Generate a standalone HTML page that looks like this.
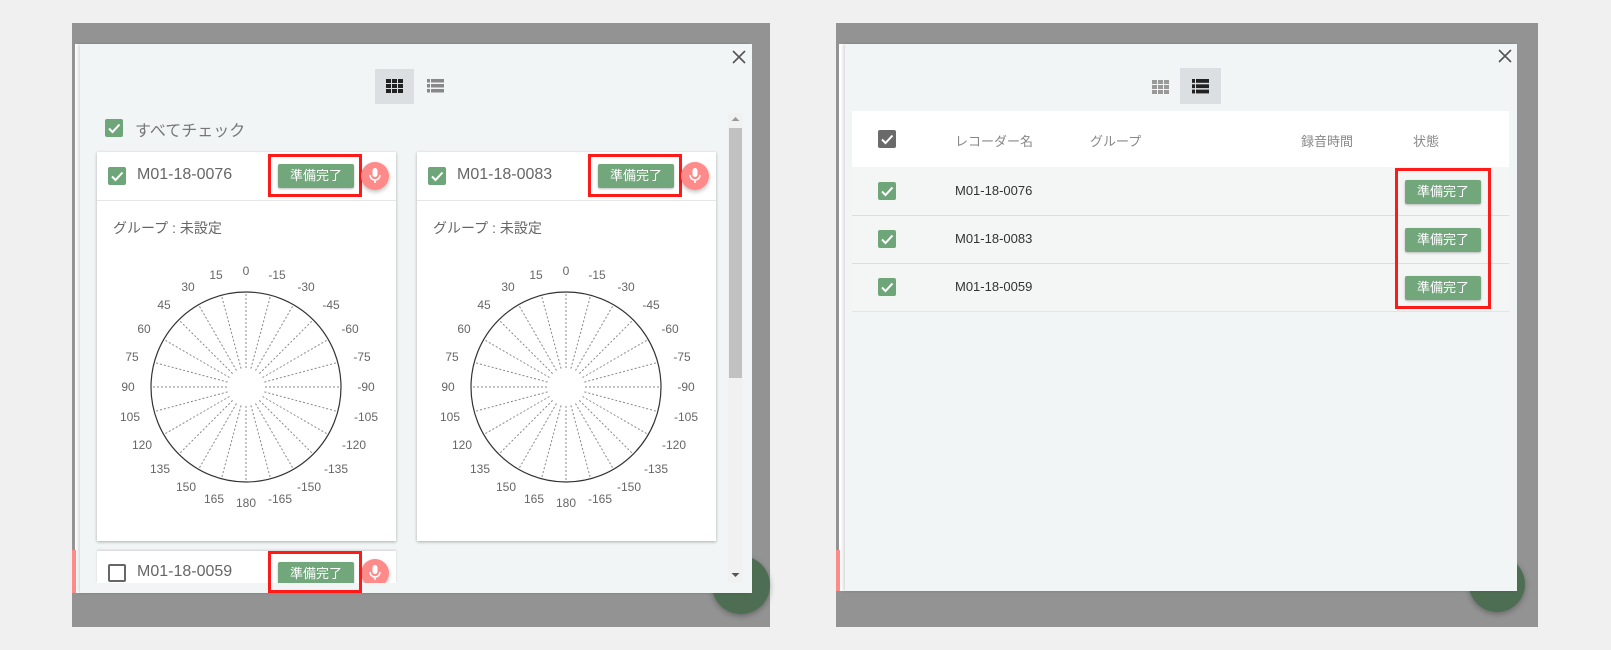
<!DOCTYPE html>
<html><head><meta charset="utf-8"><style>
*{box-sizing:border-box;margin:0;padding:0}
body{width:1611px;height:650px;background:#f0f0f0;position:relative;overflow:hidden;font-family:"Liberation Sans","Noto Sans CJK JP",sans-serif;color:#666}
.abs{position:absolute}
.gray{background:#939393}
.modal{background:#f2f5f6}
.cb{position:absolute;width:18px;height:18px;border-radius:2px;background:#6fa679}
.cb svg{position:absolute;left:0;top:0}
.cbo{position:absolute;width:18px;height:18px;border:2px solid #666;border-radius:2px;background:#fff}
.btn{position:absolute;background:#72a77c;color:#fff;font-size:13px;text-align:center;border-radius:2px;box-shadow:0 1px 2px rgba(0,0,0,.25)}
.red{position:absolute;border:3px solid #ff1a1a}
.mic{position:absolute;width:28px;height:28px;border-radius:50%;background:#ff8a8a;box-shadow:0 2px 4px rgba(0,0,0,.25)}
.card{position:absolute;background:#fff;box-shadow:0 1px 3px rgba(0,0,0,.3)}
</style></head><body>

<!-- LEFT -->
<div class="abs gray" style="left:72px;top:23px;width:698px;height:604px"></div>
<div class="abs" style="left:75px;top:44px;width:6px;height:549px;background:#fff"></div>
<div class="abs" style="left:72px;top:550px;width:4px;height:43px;background:#ff8a8a"></div>
<div class="abs" style="left:712px;top:556px;width:58px;height:58px;border-radius:50%;background:#4e6e53;box-shadow:0 2px 6px rgba(0,0,0,.3)"></div>
<div class="abs modal" style="left:80px;top:44px;width:672px;height:549px;box-shadow:-2px 0 3px rgba(0,0,0,.15)"></div>
<svg class="abs" style="left:731px;top:49px" width="16" height="16"><path d="M2 2L14 14M14 2L2 14" stroke="#555" stroke-width="1.6"/></svg>
<div class="abs" style="left:375px;top:69px;width:39px;height:35px;background:#dcdfe1"></div>
<svg class="abs" style="left:386px;top:79px" width="17" height="15"><g fill="#222"><rect x="0" y="0" width="5" height="4"/><rect x="6" y="0" width="5" height="4"/><rect x="12" y="0" width="5" height="4"/><rect x="0" y="5" width="5" height="4"/><rect x="6" y="5" width="5" height="4"/><rect x="12" y="5" width="5" height="4"/><rect x="0" y="10" width="5" height="4"/><rect x="6" y="10" width="5" height="4"/><rect x="12" y="10" width="5" height="4"/></g></svg>
<svg class="abs" style="left:427px;top:79px" width="17" height="15"><g fill="#888"><rect x="0" y="0" width="3" height="3.5"/><rect x="4" y="0" width="13" height="3.5"/><rect x="0" y="5" width="3" height="3.5"/><rect x="4" y="5" width="13" height="3.5"/><rect x="0" y="10" width="3" height="3.5"/><rect x="4" y="10" width="13" height="3.5"/></g></svg>

<div class="cb" style="left:105px;top:119px"><svg width="18" height="18"><path d="M4 9.5l3.5 3.5 7-7.5" stroke="#fff" stroke-width="2" fill="none"/></svg></div>
<div class="abs" style="left:135px;top:117px;font-size:16px;color:#777">すべてチェック</div>

<!-- scrollbar -->
<div class="abs" style="left:728px;top:113px;width:15px;height:470px;background:#f1f1f1"></div>
<div class="abs" style="left:729px;top:128px;width:13px;height:250px;background:#c1c1c1"></div>
<svg class="abs" style="left:731px;top:116px" width="9" height="6"><path d="M0.5 5L4.5 1L8.5 5Z" fill="#999"/></svg>
<svg class="abs" style="left:731px;top:572px" width="9" height="6"><path d="M0.5 1L4.5 5L8.5 1Z" fill="#555"/></svg>

<!-- card 1 -->
<div class="card" style="left:97px;top:152px;width:299px;height:389px">
 <div class="abs" style="left:0;top:48px;width:299px;height:1px;background:#e6e6e6"></div>
 <div class="cb" style="left:11px;top:15px"><svg width="18" height="18"><path d="M4 9.5l3.5 3.5 7-7.5" stroke="#fff" stroke-width="2" fill="none"/></svg></div>
 <div class="abs" style="left:40px;top:14px;font-size:16px;color:#666">M01-18-0076</div>
 <div class="abs" style="left:16px;top:66px;font-size:14px;color:#666">グループ : 未設定</div>
</div>
<!-- card 2 -->
<div class="card" style="left:417px;top:152px;width:299px;height:389px">
 <div class="abs" style="left:0;top:48px;width:299px;height:1px;background:#e6e6e6"></div>
 <div class="cb" style="left:11px;top:15px"><svg width="18" height="18"><path d="M4 9.5l3.5 3.5 7-7.5" stroke="#fff" stroke-width="2" fill="none"/></svg></div>
 <div class="abs" style="left:40px;top:14px;font-size:16px;color:#666">M01-18-0083</div>
 <div class="abs" style="left:16px;top:66px;font-size:14px;color:#666">グループ : 未設定</div>
</div>
<!-- card 3 -->
<div class="card" style="left:97px;top:551px;width:299px;height:32px;box-shadow:0 -1px 2px rgba(0,0,0,.15)">
 <div class="cbo" style="left:11px;top:13px"></div>
 <div class="abs" style="left:40px;top:12px;font-size:16px;color:#666">M01-18-0059</div>
</div>

<!-- dials -->
<svg class="abs" style="left:96px;top:237px" width="300" height="300" viewBox="-150 -150 300 300">
<defs><g id="dial">
<g stroke="#888" stroke-width="1" stroke-dasharray="2,2">
<line x1="0" y1="-19" x2="0" y2="-95"/><line x1="4.9" y1="-18.4" x2="24.6" y2="-91.8"/><line x1="9.5" y1="-16.5" x2="47.5" y2="-82.3"/><line x1="13.4" y1="-13.4" x2="67.2" y2="-67.2"/><line x1="16.5" y1="-9.5" x2="82.3" y2="-47.5"/><line x1="18.4" y1="-4.9" x2="91.8" y2="-24.6"/><line x1="19" y1="0" x2="95" y2="0"/><line x1="18.4" y1="4.9" x2="91.8" y2="24.6"/><line x1="16.5" y1="9.5" x2="82.3" y2="47.5"/><line x1="13.4" y1="13.4" x2="67.2" y2="67.2"/><line x1="9.5" y1="16.5" x2="47.5" y2="82.3"/><line x1="4.9" y1="18.4" x2="24.6" y2="91.8"/><line x1="0" y1="19" x2="0" y2="95"/><line x1="-4.9" y1="18.4" x2="-24.6" y2="91.8"/><line x1="-9.5" y1="16.5" x2="-47.5" y2="82.3"/><line x1="-13.4" y1="13.4" x2="-67.2" y2="67.2"/><line x1="-16.5" y1="9.5" x2="-82.3" y2="47.5"/><line x1="-18.4" y1="4.9" x2="-91.8" y2="24.6"/><line x1="-19" y1="0" x2="-95" y2="0"/><line x1="-18.4" y1="-4.9" x2="-91.8" y2="-24.6"/><line x1="-16.5" y1="-9.5" x2="-82.3" y2="-47.5"/><line x1="-13.4" y1="-13.4" x2="-67.2" y2="-67.2"/><line x1="-9.5" y1="-16.5" x2="-47.5" y2="-82.3"/><line x1="-4.9" y1="-18.4" x2="-24.6" y2="-91.8"/>
</g>
<circle r="95" fill="none" stroke="#333" stroke-width="1.2"/>
</g></defs>
<use href="#dial"/>
<g font-family="Liberation Sans" font-size="12" fill="#666" text-anchor="middle">
<text x="0" y="-112">0</text><text x="-30" y="-108">15</text><text x="-58" y="-96">30</text><text x="-82" y="-78">45</text><text x="-102" y="-54">60</text><text x="-114" y="-26">75</text><text x="-118" y="4">90</text><text x="-116" y="34">105</text><text x="-104" y="62">120</text><text x="-86" y="86">135</text><text x="-60" y="104">150</text><text x="-32" y="116">165</text><text x="0" y="120">180</text>
<text x="31" y="-108">-15</text><text x="60" y="-96">-30</text><text x="85" y="-78">-45</text><text x="104" y="-54">-60</text><text x="116" y="-26">-75</text><text x="120" y="4">-90</text><text x="120" y="34">-105</text><text x="108" y="62">-120</text><text x="90" y="86">-135</text><text x="63" y="104">-150</text><text x="34" y="116">-165</text>
</g>
</svg>
<svg class="abs" style="left:416px;top:237px" width="300" height="300" viewBox="-150 -150 300 300">
<use href="#dial"/>
<g font-family="Liberation Sans" font-size="12" fill="#666" text-anchor="middle">
<text x="0" y="-112">0</text><text x="-30" y="-108">15</text><text x="-58" y="-96">30</text><text x="-82" y="-78">45</text><text x="-102" y="-54">60</text><text x="-114" y="-26">75</text><text x="-118" y="4">90</text><text x="-116" y="34">105</text><text x="-104" y="62">120</text><text x="-86" y="86">135</text><text x="-60" y="104">150</text><text x="-32" y="116">165</text><text x="0" y="120">180</text>
<text x="31" y="-108">-15</text><text x="60" y="-96">-30</text><text x="85" y="-78">-45</text><text x="104" y="-54">-60</text><text x="116" y="-26">-75</text><text x="120" y="4">-90</text><text x="120" y="34">-105</text><text x="108" y="62">-120</text><text x="90" y="86">-135</text><text x="63" y="104">-150</text><text x="34" y="116">-165</text>
</g>
</svg>

<!-- buttons/red/mic left -->
<div class="btn" style="left:278px;top:164px;width:76px;height:24px;line-height:24px">準備完了</div>
<div class="red" style="left:268px;top:154px;width:94px;height:43px"></div>
<div class="mic" style="left:361px;top:162px"></div>
<div class="btn" style="left:598px;top:164px;width:76px;height:24px;line-height:24px">準備完了</div>
<div class="red" style="left:588px;top:154px;width:94px;height:43px"></div>
<div class="mic" style="left:681px;top:162px"></div>
<div class="btn" style="left:278px;top:562px;width:76px;height:24px;line-height:24px">準備完了</div>
<div class="mic" style="left:361px;top:559px"></div>
<svg class="abs" style="left:368px;top:168px" width="14" height="16"><rect x="4.5" y="0" width="5" height="9" rx="2.5" fill="#fff"/><path d="M2 7a5 5 0 0 0 10 0M7 12v3" stroke="#fff" stroke-width="1.5" fill="none"/></svg>
<svg class="abs" style="left:688px;top:168px" width="14" height="16"><rect x="4.5" y="0" width="5" height="9" rx="2.5" fill="#fff"/><path d="M2 7a5 5 0 0 0 10 0M7 12v3" stroke="#fff" stroke-width="1.5" fill="none"/></svg>
<svg class="abs" style="left:368px;top:565px" width="14" height="16"><rect x="4.5" y="0" width="5" height="9" rx="2.5" fill="#fff"/><path d="M2 7a5 5 0 0 0 10 0M7 12v3" stroke="#fff" stroke-width="1.5" fill="none"/></svg>
<div class="abs" style="left:80px;top:583px;width:672px;height:10px;background:#f2f5f6"></div>
<div class="red" style="left:268px;top:551px;width:94px;height:42px"></div>

<!-- RIGHT -->
<div class="abs gray" style="left:836px;top:23px;width:702px;height:604px"></div>
<div class="abs" style="left:839px;top:44px;width:6px;height:547px;background:#fff"></div>
<div class="abs" style="left:836px;top:550px;width:4px;height:41px;background:#ff8a8a"></div>
<div class="abs" style="left:1469px;top:556px;width:56px;height:56px;border-radius:50%;background:#4e6e53;box-shadow:0 2px 6px rgba(0,0,0,.3)"></div>
<div class="abs modal" style="left:845px;top:44px;width:672px;height:547px;box-shadow:-2px 0 3px rgba(0,0,0,.15)"></div>
<svg class="abs" style="left:1497px;top:48px" width="16" height="16"><path d="M2 2L14 14M14 2L2 14" stroke="#555" stroke-width="1.6"/></svg>
<svg class="abs" style="left:1152px;top:80px" width="17" height="15"><g fill="#999"><rect x="0" y="0" width="5" height="4"/><rect x="6" y="0" width="5" height="4"/><rect x="12" y="0" width="5" height="4"/><rect x="0" y="5" width="5" height="4"/><rect x="6" y="5" width="5" height="4"/><rect x="12" y="5" width="5" height="4"/><rect x="0" y="10" width="5" height="4"/><rect x="6" y="10" width="5" height="4"/><rect x="12" y="10" width="5" height="4"/></g></svg>
<div class="abs" style="left:1180px;top:68px;width:41px;height:36px;background:#dcdfe1"></div>
<svg class="abs" style="left:1192px;top:79px" width="17" height="15"><g fill="#222"><rect x="0" y="0" width="3" height="3.8"/><rect x="4" y="0" width="13" height="3.8"/><rect x="0" y="5.3" width="3" height="3.8"/><rect x="4" y="5.3" width="13" height="3.8"/><rect x="0" y="10.6" width="3" height="3.8"/><rect x="4" y="10.6" width="13" height="3.8"/></g></svg>

<div class="abs" style="left:852px;top:111px;width:657px;height:56px;background:#fff"></div>
<div class="cb" style="left:878px;top:130px;background:#6a6a6a"><svg width="18" height="18"><path d="M4 9.5l3.5 3.5 7-7.5" stroke="#fff" stroke-width="2" fill="none"/></svg></div>
<div class="abs" style="left:955px;top:131px;font-size:13px;color:#888">レコーダー名</div>
<div class="abs" style="left:1090px;top:131px;font-size:13px;color:#888">グループ</div>
<div class="abs" style="left:1301px;top:131px;font-size:13px;color:#888">録音時間</div>
<div class="abs" style="left:1413px;top:131px;font-size:13px;color:#888">状態</div>

<div class="abs" style="left:852px;top:167px;width:657px;height:144px;background:#f4f5f5"></div>
<div class="abs" style="left:852px;top:215px;width:657px;height:1px;background:#ddd"></div>
<div class="abs" style="left:852px;top:263px;width:657px;height:1px;background:#ddd"></div>
<div class="abs" style="left:852px;top:311px;width:657px;height:1px;background:#e4e4e4"></div>

<div class="cb" style="left:878px;top:182px"><svg width="18" height="18"><path d="M4 9.5l3.5 3.5 7-7.5" stroke="#fff" stroke-width="2" fill="none"/></svg></div>
<div class="cb" style="left:878px;top:230px"><svg width="18" height="18"><path d="M4 9.5l3.5 3.5 7-7.5" stroke="#fff" stroke-width="2" fill="none"/></svg></div>
<div class="cb" style="left:878px;top:278px"><svg width="18" height="18"><path d="M4 9.5l3.5 3.5 7-7.5" stroke="#fff" stroke-width="2" fill="none"/></svg></div>
<div class="abs" style="left:955px;top:183px;font-size:13px;color:#333">M01-18-0076</div>
<div class="abs" style="left:955px;top:231px;font-size:13px;color:#333">M01-18-0083</div>
<div class="abs" style="left:955px;top:279px;font-size:13px;color:#333">M01-18-0059</div>
<div class="btn" style="left:1405px;top:180px;width:76px;height:24px;line-height:24px">準備完了</div>
<div class="btn" style="left:1405px;top:228px;width:76px;height:24px;line-height:24px">準備完了</div>
<div class="btn" style="left:1405px;top:276px;width:76px;height:24px;line-height:24px">準備完了</div>
<div class="red" style="left:1395px;top:168px;width:96px;height:141px"></div>
</body></html>
